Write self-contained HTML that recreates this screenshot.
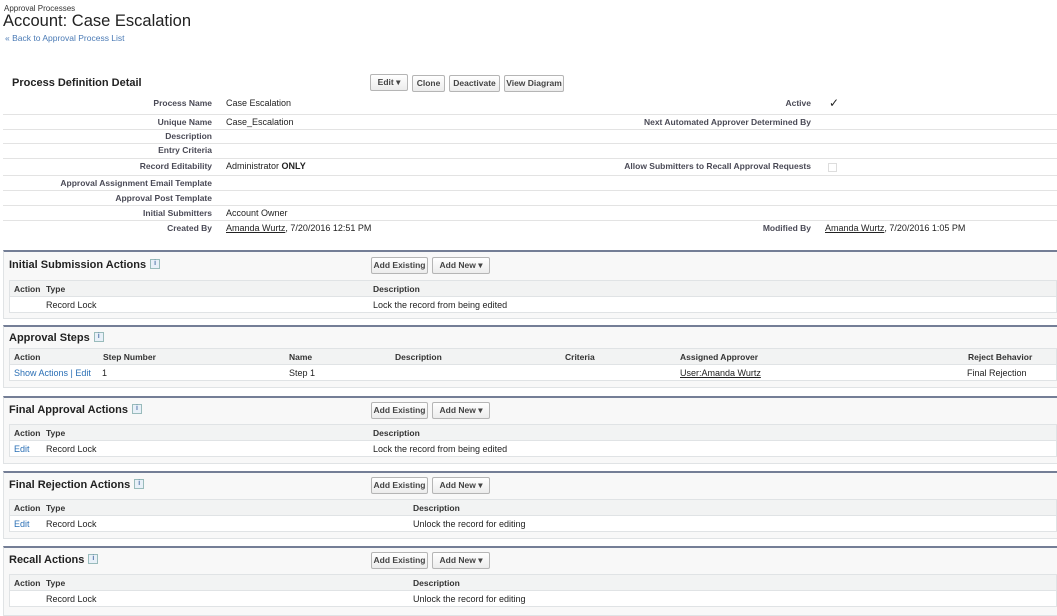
<!DOCTYPE html>
<html><head><meta charset="utf-8"><style>
*{margin:0;padding:0;box-sizing:border-box}
body{width:1057px;height:616px;overflow:hidden;background:#fff;font-family:"Liberation Sans",Arial,sans-serif;color:#222;position:relative}
.a{position:absolute;white-space:nowrap}
.lbl{font-size:8.5px;font-weight:bold;color:#4a4a56;text-align:right}
.val{font-size:9px;color:#222}
.line{position:absolute;left:3px;right:0;height:1px;background:#e3e3e3}
.btn{position:absolute;height:17px;border:1px solid #b5b5b5;border-radius:2px;background:linear-gradient(#fff,#ececec);font-size:8.5px;font-weight:bold;color:#444;line-height:15px;text-align:center}
.sec{position:absolute;left:3px;right:0;background:#f8f8f8;border-top:2px solid #747e96;border-bottom:1px solid #e0e3e5;border-left:1px solid #e0e3e5}
.sec h3{position:absolute;left:5px;font-size:11px;font-weight:bold;color:#222}
.info{display:inline-block;width:10px;height:10px;border:1px solid #9bb;background:#e8f0f8;font-size:7px;line-height:8px;text-align:center;vertical-align:top;margin-left:4px;color:#5577aa}
.tb{position:absolute;left:5px;right:0;background:#fff;border:1px solid #e0e3e5}
.th{height:16px;background:#f2f3f3;border-bottom:1px solid #e0e3e5;position:relative}
.tr{height:15px;position:relative}
.th span{position:absolute;top:3px;font-size:8.5px;font-weight:bold;color:#333}
.tr span{position:absolute;top:3px;font-size:9px;color:#222}
.tr span.lk{color:#2a6fb5}
u{text-decoration:underline}
</style></head><body>
<div class="a" style="left:4px;top:4px;font-size:8px;color:#333">Approval Processes</div>
<div class="a" style="left:3px;top:12px;font-size:16.5px;color:#222">Account: Case Escalation</div>
<div class="a" style="left:5px;top:33px;font-size:8.5px;color:#4a7ab5">« Back to Approval Process List</div>

<div class="a" style="left:12px;top:77px;font-size:11px;font-weight:bold">Process Definition Detail</div>
<div class="btn" style="left:370px;top:74px;width:38px">Edit ▾</div>
<div class="btn" style="left:412px;top:75px;width:33px">Clone</div>
<div class="btn" style="left:449px;top:75px;width:51px">Deactivate</div>
<div class="btn" style="left:504px;top:75px;width:60px">View Diagram</div>

<div class="line" style="top:114px"></div>
<div class="line" style="top:129px"></div>
<div class="line" style="top:143px"></div>
<div class="line" style="top:158px"></div>
<div class="line" style="top:175px"></div>
<div class="line" style="top:190px"></div>
<div class="line" style="top:205px"></div>
<div class="line" style="top:220px"></div>

<div class="a lbl" style="right:845px;top:98px">Process Name</div><div class="a val" style="left:226px;top:98px">Case Escalation</div>
<div class="a lbl" style="right:845px;top:117px">Unique Name</div><div class="a val" style="left:226px;top:117px">Case_Escalation</div>
<div class="a lbl" style="right:845px;top:131px">Description</div>
<div class="a lbl" style="right:845px;top:145px">Entry Criteria</div>
<div class="a lbl" style="right:845px;top:161px">Record Editability</div><div class="a val" style="left:226px;top:161px">Administrator <b>ONLY</b></div>
<div class="a lbl" style="right:845px;top:178px">Approval Assignment Email Template</div>
<div class="a lbl" style="right:845px;top:193px">Approval Post Template</div>
<div class="a lbl" style="right:845px;top:208px">Initial Submitters</div><div class="a val" style="left:226px;top:208px">Account Owner</div>
<div class="a lbl" style="right:845px;top:223px">Created By</div><div class="a val" style="left:226px;top:223px"><u>Amanda Wurtz</u>, 7/20/2016 12:51 PM</div>

<div class="a lbl" style="right:246px;top:98px">Active</div><div class="a" style="left:829px;top:96px;font-size:12px">✓</div>
<div class="a lbl" style="right:246px;top:117px">Next Automated Approver Determined By</div>
<div class="a lbl" style="right:246px;top:161px">Allow Submitters to Recall Approval Requests</div>
<div class="a" style="left:828px;top:163px;width:9px;height:9px;border:1px solid #ddd"></div>
<div class="a lbl" style="right:246px;top:223px">Modified By</div><div class="a val" style="left:825px;top:223px"><u>Amanda Wurtz</u>, 7/20/2016 1:05 PM</div>

<div class="sec" style="top:250px;height:69px">
<h3 style="top:7px">Initial Submission Actions<span class="info">i</span></h3>
<div class="btn" style="left:367px;top:5px;width:57px">Add Existing</div>
<div class="btn" style="left:428px;top:5px;width:58px">Add New ▾</div>
<div class="tb" style="top:28px"><div class="th"><span style="left:4px">Action</span><span style="left:36px">Type</span><span style="left:363px">Description</span></div>
<div class="tr"><span style="left:36px">Record Lock</span><span style="left:363px">Lock the record from being edited</span></div></div>
</div>

<div class="sec" style="top:325px;height:63px">
<h3 style="top:5px">Approval Steps<span class="info">i</span></h3>
<div class="tb" style="top:21px"><div class="th"><span style="left:4px">Action</span><span style="left:93px">Step Number</span><span style="left:279px">Name</span><span style="left:385px">Description</span><span style="left:555px">Criteria</span><span style="left:670px">Assigned Approver</span><span style="left:958px">Reject Behavior</span></div>
<div class="tr"><span style="left:4px" class="lk">Show Actions | Edit</span><span style="left:92px">1</span><span style="left:279px">Step 1</span><span style="left:670px"><u>User:Amanda Wurtz</u></span><span style="left:957px">Final Rejection</span></div></div>
</div>

<div class="sec" style="top:396px;height:68px">
<h3 style="top:6px">Final Approval Actions<span class="info">i</span></h3>
<div class="btn" style="left:367px;top:4px;width:57px">Add Existing</div>
<div class="btn" style="left:428px;top:4px;width:58px">Add New ▾</div>
<div class="tb" style="top:26px"><div class="th"><span style="left:4px">Action</span><span style="left:36px">Type</span><span style="left:363px">Description</span></div>
<div class="tr"><span style="left:4px" class="lk">Edit</span><span style="left:36px">Record Lock</span><span style="left:363px">Lock the record from being edited</span></div></div>
</div>

<div class="sec" style="top:471px;height:68px">
<h3 style="top:6px">Final Rejection Actions<span class="info">i</span></h3>
<div class="btn" style="left:367px;top:4px;width:57px">Add Existing</div>
<div class="btn" style="left:428px;top:4px;width:58px">Add New ▾</div>
<div class="tb" style="top:26px"><div class="th"><span style="left:4px">Action</span><span style="left:36px">Type</span><span style="left:403px">Description</span></div>
<div class="tr"><span style="left:4px" class="lk">Edit</span><span style="left:36px">Record Lock</span><span style="left:403px">Unlock the record for editing</span></div></div>
</div>

<div class="sec" style="top:546px;height:70px">
<h3 style="top:6px">Recall Actions<span class="info">i</span></h3>
<div class="btn" style="left:367px;top:4px;width:57px">Add Existing</div>
<div class="btn" style="left:428px;top:4px;width:58px">Add New ▾</div>
<div class="tb" style="top:26px"><div class="th"><span style="left:4px">Action</span><span style="left:36px">Type</span><span style="left:403px">Description</span></div>
<div class="tr"><span style="left:36px">Record Lock</span><span style="left:403px">Unlock the record for editing</span></div></div>
</div>
</body></html>
